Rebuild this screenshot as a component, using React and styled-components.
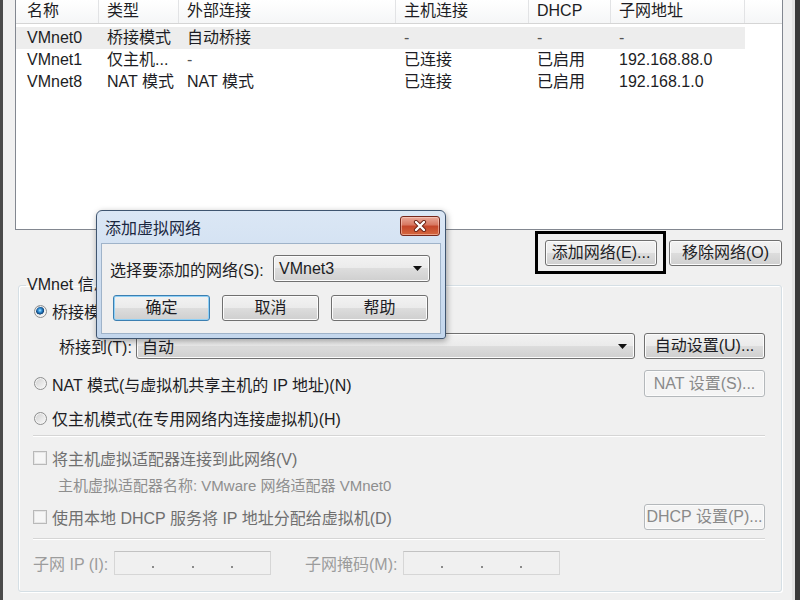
import React from 'react'
import styled, { createGlobalStyle } from 'styled-components'

const GlobalStyle = createGlobalStyle`
  html, body {
    margin: 0;
    padding: 0;
    background: #f0f0f0;
  }
  body {
    font-family: "Liberation Sans", "Noto Sans CJK SC", sans-serif;
    font-size: 16px;
    color: #1d1d24;
  }
  * {
    box-sizing: border-box;
  }
`

const columns = ['名称', '类型', '外部连接', '主机连接', 'DHCP', '子网地址']
const colWidths = '83px 80px 217px 133px 82px 134px'

const networks = [
    ['VMnet0', '桥接模式', '自动桥接', '-', '-', '-'],
    ['VMnet1', '仅主机...', '-', '已连接', '已启用', '192.168.88.0'],
    ['VMnet8', 'NAT 模式', 'NAT 模式', '已连接', '已启用', '192.168.1.0'],
]

function Arrow() {
    return (
        <svg width="9" height="5" viewBox="0 0 9 5">
            <path d="M0 0H9L4.5 5Z" fill="#111" />
        </svg>
    )
}

function CloseGlyph() {
    return (
        <svg width="14" height="12" viewBox="0 0 14 12">
            <path d="M3 2L11 10M11 2L3 10" stroke="#6b2315" strokeWidth="4.2" strokeLinecap="round" />
            <path d="M3 2L11 10M11 2L3 10" stroke="#fff" strokeWidth="2.4" strokeLinecap="round" />
        </svg>
    )
}

function IpBox() {
    return (
        <IpField>
            <Dot />
            <Dot />
            <Dot />
        </IpField>
    )
}

function App() {
    return (
        <>
            <GlobalStyle />
            <Window>
                <List>
                    <HeaderRow>
                        {columns.map((c, i) => (
                            <HeaderCell key={c} $first={i === 0}>{c}</HeaderCell>
                        ))}
                        <div />
                    </HeaderRow>
                    <ListBody>
                        {networks.map((r, i) => (
                            <Row key={r[0]} $selected={i === 0}>
                                {r.map((v, j) => (
                                    <Cell key={j} $first={j === 0} $muted={v === '-'}>{v}</Cell>
                                ))}
                            </Row>
                        ))}
                    </ListBody>
                </List>

                <ActionBar>
                    <FocusMark>
                        <Button $w={112}>添加网络(E)...</Button>
                    </FocusMark>
                    <Button $w={113}>移除网络(O)</Button>
                </ActionBar>

                <Group>
                    <Legend>VMnet 信息</Legend>
                    <Option>
                        <Radio $on />
                        <span>桥接模式(将虚拟机直接连接到外部网络)(B)</span>
                    </Option>
                    <BridgeRow>
                        <FieldLabel $w={72}>桥接到(T):</FieldLabel>
                        <Combo $grow>
                            <span>自动</span>
                            <Arrow />
                        </Combo>
                        <Button $w={121}>自动设置(U)...</Button>
                    </BridgeRow>
                    <SplitRow $top={11}>
                        <Option>
                            <Radio />
                            <span>NAT 模式(与虚拟机共享主机的 IP 地址)(N)</span>
                        </Option>
                        <Button $w={121} $h={27} disabled>NAT 设置(S)...</Button>
                    </SplitRow>
                    <Option $top={10}>
                        <Radio />
                        <span>仅主机模式(在专用网络内连接虚拟机)(H)</span>
                    </Option>

                    <Separator $top={6} />

                    <Option $top={10} $shift={-1}>
                        <CheckBox />
                        <Muted>将主机虚拟适配器连接到此网络(V)</Muted>
                    </Option>
                    <Note>主机虚拟适配器名称: VMware 网络适配器 VMnet0</Note>
                    <SplitRow $top={7}>
                        <Option $shift={-1}>
                            <CheckBox />
                            <Muted>使用本地 DHCP 服务将 IP 地址分配给虚拟机(D)</Muted>
                        </Option>
                        <Button $w={121} disabled>DHCP 设置(P)...</Button>
                    </SplitRow>

                    <Separator $top={8} />

                    <SubnetRow>
                        <FieldLabel $w={81} $faint>子网 IP (I):</FieldLabel>
                        <IpBox />
                        <FieldLabel $w={98} $faint $gap={34}>子网掩码(M):</FieldLabel>
                        <IpBox />
                    </SubnetRow>
                </Group>

                <Dialog>
                    <TitleBar>
                        <Title>添加虚拟网络</Title>
                        <CloseButton>
                            <CloseGlyph />
                        </CloseButton>
                    </TitleBar>
                    <DialogBody>
                        <PickRow>
                            <span>选择要添加的网络(S):</span>
                            <Combo $w={157} $h={27}>
                                <span>VMnet3</span>
                                <Arrow />
                            </Combo>
                        </PickRow>
                        <DialogButtons>
                            <Button $w={97} $default>确定</Button>
                            <Button $w={97}>取消</Button>
                            <Button $w={97}>帮助</Button>
                        </DialogButtons>
                    </DialogBody>
                </Dialog>
            </Window>
        </>
    )
}

export default App

const Window = styled.div`
    position: relative;
    width: 800px;
    height: 600px;
    overflow: hidden;
    background: #f0f0f0;
    border-left: 3px solid #4a4a4a;
    border-right: 5px solid #3a3a3a;
    box-shadow: inset -3px 0 0 #e4e4e4;
    padding: 0 12px;
    display: flex;
    flex-direction: column;
`

const List = styled.div`
    height: 230px;
    flex: none;
    background: #fff;
    border: 1px solid #828790;
    border-top: none;
    display: flex;
    flex-direction: column;
`

const HeaderRow = styled.div`
    display: grid;
    grid-template-columns: ${colWidths} 1fr;
    height: 24px;
    flex: none;
    border-bottom: 1px solid #d5d5d5;
    background: linear-gradient(#ffffff, #f5f6f7);
`

const HeaderCell = styled.div`
    padding-left: ${p => (p.$first ? 11 : 8)}px;
    line-height: 22px;
    border-right: 1px solid #e2e3e5;
    white-space: nowrap;
`

const ListBody = styled.div`
    flex: 1;
    padding-top: 3px;
`

const Row = styled.div`
    display: grid;
    grid-template-columns: ${colWidths};
    width: max-content;
    height: 22px;
    background: ${p => (p.$selected ? '#ededed' : 'transparent')};
`

const Cell = styled.div`
    padding-left: ${p => (p.$first ? 11 : 8)}px;
    line-height: 22px;
    white-space: nowrap;
    overflow: hidden;
    color: ${p => (p.$muted ? '#555' : 'inherit')};
`

const ActionBar = styled.div`
    display: flex;
    justify-content: flex-end;
    align-items: center;
    gap: 3px;
    margin-top: 1px;
    padding-right: 1px;
    flex: none;
`

const FocusMark = styled.div`
    border: 3px solid #000;
    padding: 6px 6px 5px 7px;
`

const Button = styled.button`
    width: ${p => p.$w}px;
    height: ${p => p.$h || 26}px;
    flex: none;
    padding: 0;
    margin: 0;
    font: inherit;
    line-height: 1;
    color: ${p => (p.disabled ? '#8a8a8a' : '#1d1d24')};
    border: 1px solid ${p => (p.$default ? '#3c7fb1' : p.disabled ? '#b4b8bb' : '#707070')};
    border-radius: 3px;
    background: ${p =>
        p.disabled
            ? '#f4f4f4'
            : 'linear-gradient(#f2f2f2 0%, #ebebeb 49%, #dddddd 50%, #cfcfcf 100%)'};
    box-shadow: inset 0 0 0 1px ${p => (p.$default ? '#8fd0f6' : p.disabled ? '#fbfbfb' : '#fcfcfc')};
    display: flex;
    align-items: center;
    justify-content: center;
    white-space: nowrap;
`

const Group = styled.fieldset`
    margin: 1px 1px 0 3px;
    padding: 5px 16px 16px 15px;
    border: 1px solid #d5dfe5;
    border-radius: 3px;
    min-width: 0;
    box-shadow: 1px 1px 0 #fff, inset 1px 1px 0 #fff;
`

const Legend = styled.legend`
    margin-left: -8px;
    padding: 0 1px;
    line-height: 20px;
`

const Option = styled.div`
    display: flex;
    align-items: center;
    gap: 5px;
    height: 22px;
    margin-top: ${p => p.$top || 0}px;
    margin-left: ${p => p.$shift || 0}px;
    white-space: nowrap;
`

const Radio = styled.span`
    width: 13px;
    height: 13px;
    flex: none;
    border-radius: 50%;
    border: 1px solid #8e8f8f;
    background: ${p =>
        p.$on
            ? 'radial-gradient(circle at 45% 40%, #b4e6ff 0, #3a9be0 1.6px, #14508c 3.4px, #1b4a78 3.9px, transparent 4.4px), linear-gradient(135deg, #cfcfcf, #fbfbfb)'
            : 'linear-gradient(135deg, #cfcfcf, #fbfbfb)'};
    box-shadow: inset 0 0 0 1px #f4f4f4;
`

const CheckBox = styled.span`
    width: 14px;
    height: 14px;
    flex: none;
    border: 1px solid #b9b9b9;
    background: #f6f6f6;
    box-shadow: inset 0 0 0 1px #e6e6e6;
`

const Muted = styled.span`
    color: #6f6f6f;
`

const BridgeRow = styled.div`
    display: flex;
    align-items: center;
    gap: 9px;
    margin-top: 11px;
    padding-left: 25px;
`

const FieldLabel = styled.span`
    width: ${p => p.$w}px;
    flex: none;
    margin-left: ${p => p.$gap || 0}px;
    margin-right: ${p => (p.$faint ? 0 : -4)}px;
    color: ${p => (p.$faint ? '#9c9c9c' : 'inherit')};
    white-space: nowrap;
`

const Combo = styled.div`
    flex: ${p => (p.$grow ? 1 : 'none')};
    width: ${p => (p.$w ? `${p.$w}px` : 'auto')};
    height: ${p => p.$h || 26}px;
    border: 1px solid #707070;
    border-radius: 3px;
    background: linear-gradient(#f2f2f2 0%, #ebebeb 49%, #dddddd 50%, #cfcfcf 100%);
    box-shadow: inset 0 0 0 1px #fcfcfc;
    display: flex;
    align-items: center;
    justify-content: space-between;
    padding: 0 7px 0 5px;
`

const SplitRow = styled.div`
    display: flex;
    align-items: center;
    justify-content: space-between;
    margin-top: ${p => p.$top}px;
`

const Separator = styled.div`
    height: 2px;
    margin: ${p => p.$top}px 0 0 -1px;
    border-top: 1px solid #d5d5d5;
    border-bottom: 1px solid #ffffff;
`

const Note = styled.div`
    margin-top: 6px;
    padding-left: 24px;
    height: 22px;
    line-height: 22px;
    font-size: 15px;
    color: #8e8e8e;
    white-space: nowrap;
`

const SubnetRow = styled.div`
    display: flex;
    align-items: center;
    margin: 11px 0 0 -1px;
`

const IpField = styled.div`
    width: 157px;
    height: 24px;
    flex: none;
    border: 1px solid #d6d6d6;
    border-top-color: #c2c2c2;
    background: #f0f0f0;
    display: flex;
    align-items: center;
    justify-content: space-evenly;
`

const Dot = styled.span`
    width: 2px;
    height: 2px;
    margin-top: 7px;
    background: #8a8a8a;
`

const Dialog = styled.div`
    position: absolute;
    left: 93px;
    top: 210px;
    width: 350px;
    border: 1px solid #3f5570;
    border-radius: 6px 6px 3px 3px;
    background: linear-gradient(#dbe7f5, #c3d6ec);
    padding: 0 4px 4px;
    box-shadow: 1px 2px 6px rgba(0, 0, 0, 0.35);
`

const TitleBar = styled.div`
    height: 32px;
    display: flex;
    align-items: center;
    justify-content: space-between;
    padding: 0 1px 0 4px;
`

const Title = styled.span`
    color: #1a2740;
`

const CloseButton = styled.div`
    width: 40px;
    height: 20px;
    margin-top: -3px;
    border: 1px solid #76281c;
    border-radius: 3px;
    background: linear-gradient(#eaa99a 0%, #d7765f 45%, #c4452a 50%, #d5683f 100%);
    box-shadow: inset 0 0 0 1px rgba(255, 220, 210, 0.5);
    display: flex;
    align-items: center;
    justify-content: center;
`

const DialogBody = styled.div`
    background: #f0f0f0;
    border: 1px solid #9fb3c9;
    padding: 11px 10px 12px 8px;
`

const PickRow = styled.div`
    display: flex;
    align-items: center;
    justify-content: space-between;
    white-space: nowrap;
`

const DialogButtons = styled.div`
    display: flex;
    gap: 12px;
    margin-top: 13px;
    padding-left: 3px;
`
